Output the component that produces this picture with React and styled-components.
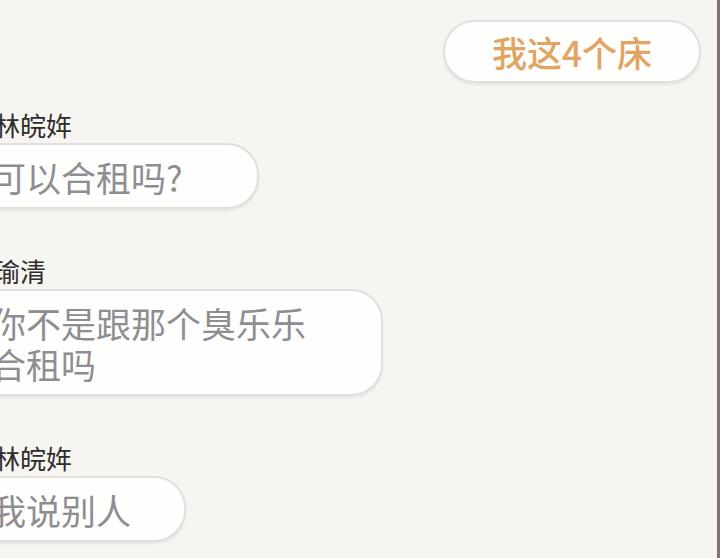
import styled, { createGlobalStyle } from "styled-components";

const GlobalStyle = createGlobalStyle`
    body {
        margin: 0;
        background: #f7f5f2;
        font-family: "Noto Sans CJK SC", "Noto Sans", sans-serif;
    }
`;

const messages = [
    { name: "林皖姩", lines: ["可以合租吗?"], width: 299 },
    { name: "瑜清", lines: ["你不是跟那个臭乐乐", "合租吗"], width: 423 },
    { name: "林皖姩", lines: ["我说别人"], width: 226 },
];

export default function App() {
    return (
        <>
            <GlobalStyle />
            <Screen>
                <MineRow>
                    <MineBubble>我这4个床</MineBubble>
                </MineRow>
                {messages.map((m, i) => (
                    <Group key={i} first={i === 0}>
                        <Name>{m.name}</Name>
                        <Bubble $width={m.width}>
                            {m.lines.map((line, j) => (
                                <Line key={j}>{line}</Line>
                            ))}
                        </Bubble>
                    </Group>
                ))}
            </Screen>
        </>
    );
}

const Screen = styled.div`
    width: 720px;
    height: 558px;
    box-sizing: border-box;
    overflow: hidden;
    background: #f7f5f2;
    border-right: 3px solid #857173;
    display: flex;
    flex-direction: column;
    padding-top: 20px;
`;

const MineRow = styled.div`
    display: flex;
    justify-content: flex-end;
    padding-right: 16px;
`;

const MineBubble = styled.div`
    width: 258px;
    height: 63px;
    box-sizing: border-box;
    display: flex;
    align-items: center;
    justify-content: center;
    background: #fefefd;
    border: 2px solid #e3e0dc;
    border-radius: 32px;
    box-shadow: 0 2px 3px rgba(0, 0, 0, 0.07);
    color: #e2a463;
    font-size: 35px;
    font-weight: 500;
    line-height: 42px;
`;

const Group = styled.div.withConfig({ shouldForwardProp: (p) => p !== "first" })`
    display: flex;
    flex-direction: column;
    align-items: flex-start;
    margin-left: -40px;
    margin-top: ${(props) => (props.first ? "27px" : "47px")};
`;

const Name = styled.div`
    padding-left: 34px;
    font-size: 26px;
    line-height: 30px;
    color: #2f2d2c;
    margin-bottom: 3px;
`;

const Bubble = styled.div`
    width: ${(props) => props.$width}px;
    box-sizing: border-box;
    padding: 11px 20px 10px 29px;
    background: #fefefd;
    border: 2px solid #e3e0dc;
    border-radius: 32px;
    box-shadow: 0 2px 3px rgba(0, 0, 0, 0.07);
    color: #8f8d92;
    font-size: 35px;
    font-weight: 400;
    line-height: 41px;
`;

const Line = styled.div`
    white-space: nowrap;
`;
